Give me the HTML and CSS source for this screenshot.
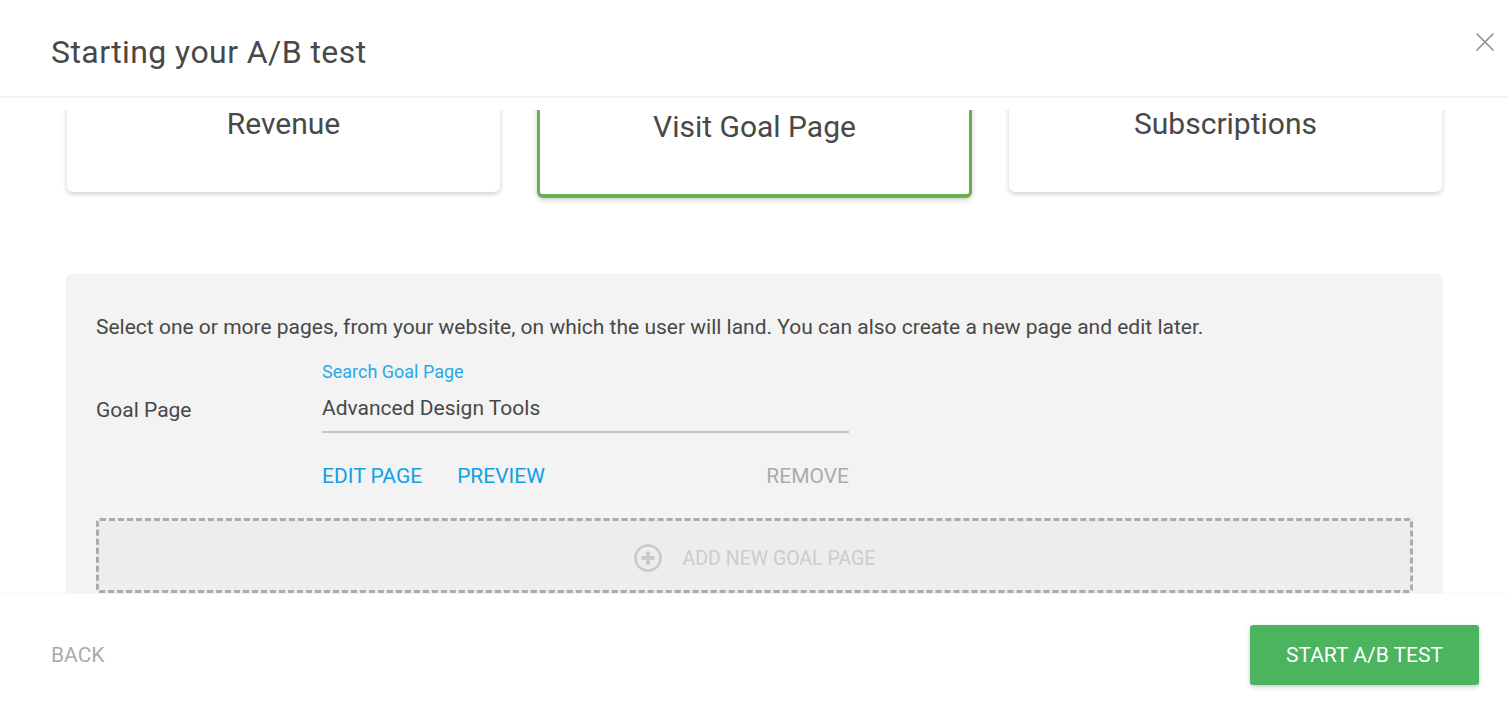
FILE: index.html
```html
<!DOCTYPE html>
<html lang="en">
<head>
    <meta charset="UTF-8">
    <title>Starting your A/B test</title>
    <link rel="stylesheet" href="styles.css">
</head>
<body>
    <div class="dialog">
        <header class="dialog-header">
            <h1>Starting your A/B test</h1>
            <button class="close" type="button" aria-label="Close">
                <svg width="20" height="20" viewBox="0 0 20 20"><path d="M1.5 1.5 18.5 18.5M18.5 1.5 1.5 18.5" fill="none" stroke="#8a8f96" stroke-width="1.6"/></svg>
            </button>
        </header>
        <section class="dialog-body">
            <div class="goals">
                <div class="goal">Revenue</div>
                <div class="goal selected">Visit Goal Page</div>
                <div class="goal">Subscriptions</div>
            </div>
            <div class="panel">
                <p class="hint">Select one or more pages, from your website, on which the user will land. You can also create a new page and edit later.</p>
                <div class="goal-row">
                    <span class="goal-label">Goal Page</span>
                    <div class="goal-field">
                        <label class="field-label">Search Goal Page</label>
                        <div class="field-value">Advanced Design Tools</div>
                        <div class="field-actions">
                            <a class="action">EDIT PAGE</a>
                            <a class="action">PREVIEW</a>
                            <a class="action remove">REMOVE</a>
                        </div>
                    </div>
                </div>
                <div class="add-goal">
                    <svg width="28" height="28" viewBox="0 0 28 28"><circle cx="14" cy="14" r="12.5" fill="none" stroke="#c9c9c9" stroke-width="2.6"/><path d="M14 7.5v13M7.5 14h13" fill="none" stroke="#c9c9c9" stroke-width="3.8"/></svg>
                    <span>ADD NEW GOAL PAGE</span>
                </div>
            </div>
        </section>
        <footer class="dialog-footer">
            <a class="back">BACK</a>
            <button class="start" type="button">START A/B TEST</button>
        </footer>
    </div>
</body>
</html>
```

FILE: styles.css
```css
body {
    background-color: #FFFFFF;
    color: #484848;
    font-family: Roboto, sans-serif;
    margin: 0;
    overflow: hidden;
}

.dialog {
    display: flex;
    flex-direction: column;
    height: 703px;
}

.dialog-header {
    align-items: flex-start;
    border-bottom: 2px solid #F4F4F4;
    box-sizing: border-box;
    display: flex;
    flex: none;
    height: 98px;
    justify-content: space-between;
    padding: 33px 14px 0 51px;
}

h1 {
    font-size: 32px;
    font-weight: 400;
    letter-spacing: 0.42px;
    line-height: 38px;
    margin: 0;
}

.close {
    background: none;
    border: 0;
    height: 20px;
    margin-top: -1px;
    padding: 0;
    width: 20px;
}

.dialog-body {
    flex: 1;
    margin-top: 12px;
    min-height: 0;
    overflow: hidden;
    padding: 0 66px;
}

.goals {
    align-items: flex-start;
    display: flex;
    gap: 37px;
    margin-top: -40px;
    padding: 0 1px;
}

.goal {
    background-color: #FFFFFF;
    border-radius: 6px;
    box-shadow: 0 2px 5px rgba(0, 0, 0, 0.2);
    box-sizing: border-box;
    flex: 1;
    font-size: 30px;
    height: 122px;
    line-height: 28px;
    padding-top: 40px;
    text-align: center;
}

.goal.selected {
    border: 3px solid #66B04F;
    border-bottom-width: 4px;
    flex: none;
    height: 128px;
    width: 435px;
}

.panel {
    background-color: #F3F3F3;
    border-radius: 6px;
    margin-top: 76px;
    padding: 40px 30px 30px;
}

.hint {
    font-size: 21px;
    line-height: 26px;
    margin: 0;
}

.goal-row {
    display: flex;
    margin-top: 22px;
}

.goal-label {
    flex: none;
    font-size: 21px;
    line-height: 26px;
    margin-top: 35px;
    width: 226px;
}

.goal-field {
    width: 527px;
}

.field-label {
    color: #29A9E8;
    display: block;
    font-size: 18px;
    line-height: 20px;
}

.field-value {
    border-bottom: 2px solid #C4C4C4;
    font-size: 21px;
    height: 36px;
    line-height: 26px;
    padding-top: 13px;
}

.field-actions {
    display: flex;
    font-size: 21px;
    gap: 35px;
    line-height: 26px;
    margin-top: 30px;
}

.action {
    color: #0FA0E6;
}

.action.remove {
    color: #ABABAB;
    margin-left: auto;
}

.add-goal {
    align-items: center;
    background-color: #EDEDED;
    border: 3px dashed #ABABAB;
    border-radius: 4px;
    box-sizing: border-box;
    color: #CCCCCC;
    display: flex;
    font-size: 19.5px;
    gap: 21px;
    height: 75px;
    justify-content: center;
    margin-top: 29px;
    padding-top: 5px;
}

.dialog-footer {
    align-items: center;
    border-top: 1px solid #F6F6F6;
    box-sizing: border-box;
    display: flex;
    flex: none;
    height: 110px;
    justify-content: space-between;
    padding: 13px 30px 0 51px;
}

.back {
    color: #ABABAB;
    font-size: 21px;
}

.start {
    background-color: #4CB35F;
    border: 0;
    border-radius: 3px;
    box-shadow: 0 2px 5px rgba(0, 0, 0, 0.2);
    color: #FFFFFF;
    font-family: Roboto, sans-serif;
    font-size: 21px;
    height: 60px;
    width: 229px;
}
```
